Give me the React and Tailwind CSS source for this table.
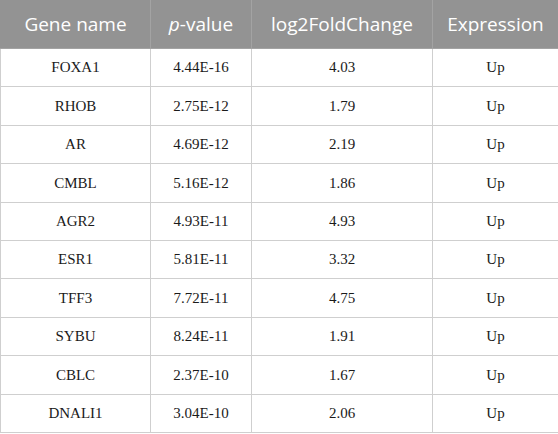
import React from "react";

const rows = [
  ["FOXA1", "4.44E-16", "4.03", "Up"],
  ["RHOB", "2.75E-12", "1.79", "Up"],
  ["AR", "4.69E-12", "2.19", "Up"],
  ["CMBL", "5.16E-12", "1.86", "Up"],
  ["AGR2", "4.93E-11", "4.93", "Up"],
  ["ESR1", "5.81E-11", "3.32", "Up"],
  ["TFF3", "7.72E-11", "4.75", "Up"],
  ["SYBU", "8.24E-11", "1.91", "Up"],
  ["CBLC", "2.37E-10", "1.67", "Up"],
  ["DNALI1", "3.04E-10", "2.06", "Up"],
];

export default function App() {
  return (
    <div className="w-[558px] h-[434px] bg-white">
      <table className="w-[558px] table-fixed border-collapse">
        <colgroup>
          <col className="w-[150px]" />
          <col className="w-[101px]" />
          <col className="w-[181px]" />
          <col className="w-[126px]" />
        </colgroup>
        <thead>
          <tr className="h-[48px] bg-[#939393] text-white text-[19px] font-['Open_Sans',sans-serif]">
            <th className="font-normal border border-[#a3a3a3] border-t-[#939393] border-l-[#939393]">Gene name</th>
            <th className="font-normal border border-[#a3a3a3] border-t-[#939393]">
              <i>p</i>-value
            </th>
            <th className="font-normal border border-[#a3a3a3] border-t-[#939393]">log2FoldChange</th>
            <th className="font-normal border border-[#a3a3a3] border-t-[#939393] border-r-[#939393]">Expression</th>
          </tr>
        </thead>
        <tbody className="font-['Liberation_Serif',serif] text-[15px] text-[#1a1a1a]">
          {rows.map((r) => (
            <tr key={r[0]} className="h-[38.4px]">
              {r.map((c, i) => (
                <td key={i} className="text-center border border-[#cfcfcf] p-0">
                  {c}
                </td>
              ))}
            </tr>
          ))}
        </tbody>
      </table>
    </div>
  );
}
